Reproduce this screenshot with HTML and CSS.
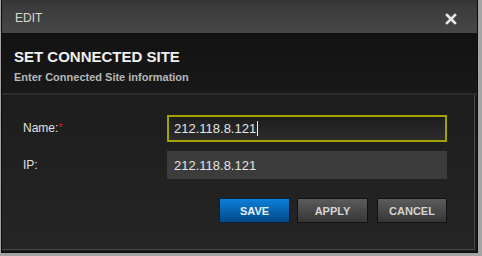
FILE: index.html
```html
<!DOCTYPE html>
<html lang="en">
<head>
    <meta charset="UTF-8">
    <meta name="viewport" content="width=device-width, initial-scale=1.0">
    <title>Edit</title>
    <link rel="stylesheet" href="styles.css">
</head>
<body>
    <div class="dialog">
        <div class="title-bar">
            <span class="title-text">EDIT</span>
            <span class="close-btn">
                <svg width="12" height="12" viewBox="0 0 12 12">
                    <path d="M2 2 L10 10 M10 2 L2 10" stroke="#e6e6e6" stroke-width="2.6" stroke-linecap="square"/>
                </svg>
            </span>
        </div>
        <div class="dialog-header">
            <h2>SET CONNECTED SITE</h2>
            <p>Enter Connected Site information</p>
        </div>
        <div class="dialog-body">
            <div class="form-row">
                <label>Name:<span class="required">*</span></label>
                <div class="field focused">212.118.8.121<span class="caret"></span></div>
            </div>
            <div class="form-row">
                <label>IP:</label>
                <div class="field readonly">212.118.8.121</div>
            </div>
            <div class="button-container">
                <button class="btn save-btn">SAVE</button>
                <button class="btn">APPLY</button>
                <button class="btn cancel-btn">CANCEL</button>
            </div>
        </div>
    </div>
</body>
</html>
```

FILE: styles.css
```css
/* Basic reset */
* {
    margin: 0;
    padding: 0;
    box-sizing: border-box;
}

body {
    font-family: "Liberation Sans", Arial, sans-serif;
    background-color: #a4a4a4;
    width: 482px;
    height: 256px;
    overflow: hidden;
}

/* Dialog frame */
.dialog {
    width: 477px;
    height: 253px;
    margin-left: 1px;
    background-color: #222;
    border: 1px solid #0c0c0c;
    border-top: none;
    box-shadow: inset -2px -2px 0 #1a1a1a, inset -3px -3px 0 #4a4a4a;
    display: flex;
    flex-direction: column;
}

.title-bar {
    height: 34px;
    border-top: 3px solid #363636;
    background: linear-gradient(to bottom, #3a3a3a, #474747);
    border-bottom: 1px solid #0e0e0e;
    display: flex;
    align-items: center;
    justify-content: space-between;
    padding: 0 20px 0 13px;
}

.title-text {
    color: #d8d8d8;
    font-size: 12px;
}

.close-btn {
    display: flex;
    margin-top: 1px;
}

.dialog-header {
    height: 61px;
    background: linear-gradient(to bottom, #121212, #191919);
    border-bottom: 2px solid #2c2c2c;
    padding: 14px 12px 0;
}

.dialog-header h2 {
    color: #f0f0f0;
    font-size: 15px;
    line-height: 18px;
    margin-bottom: 4px;
}

.dialog-header p {
    color: #b8b8b8;
    font-size: 11px;
    font-weight: bold;
    line-height: 14px;
}

.dialog-body {
    flex: 1;
    background: linear-gradient(to bottom, #1d1d1d, #252525);
    padding: 20px 27px 0 21px;
    margin-right: 3px;
    margin-bottom: 3px;
}

.form-row {
    display: flex;
    align-items: center;
    margin-bottom: 9px;
}

.form-row label {
    width: 144px;
    color: #e0e0e0;
    font-size: 12px;
    margin-top: -1px;
}

.required {
    color: #e01010;
    font-size: 11px;
    vertical-align: top;
}

.field {
    flex: 1;
    height: 28px;
    color: #e4e4e4;
    font-size: 13px;
    display: flex;
    align-items: center;
    padding-left: 7px;
}

.field.focused {
    height: 27px;
    border: 2px solid #a3a300;
    background: linear-gradient(to bottom, #1e1e1e, #2c2c2c);
    padding-left: 5px;
}

.caret {
    width: 1px;
    height: 15px;
    background-color: #f0f0f0;
    margin-left: 1px;
}

.field.readonly {
    background-color: #3c3c3c;
}

.button-container {
    display: flex;
    justify-content: flex-end;
    gap: 7px;
    margin-top: 19px;
}

.btn {
    width: 71px;
    height: 25px;
    font-family: "Liberation Sans", Arial, sans-serif;
    font-size: 11px;
    font-weight: bold;
    color: #d4d4d4;
    border: 1px solid #111;
    background: linear-gradient(to bottom, #5c5c5c, #363636);
    cursor: pointer;
}

.cancel-btn {
    width: 70px;
    margin-left: 2px;
}

.save-btn {
    color: #e8f0f8;
    border-color: #0b2236;
    background: linear-gradient(to bottom, #0c7fdc, #024986);
}
```
